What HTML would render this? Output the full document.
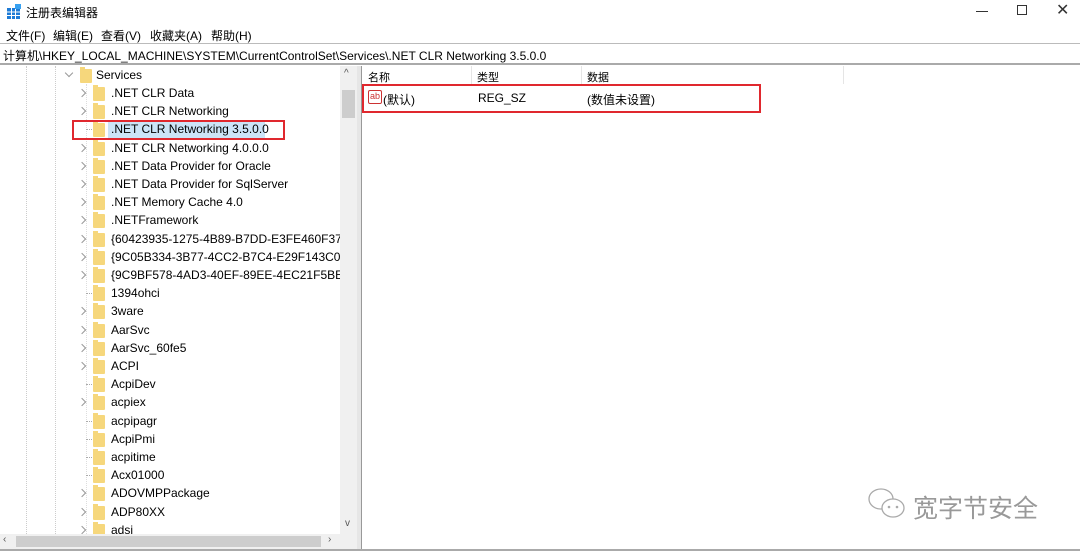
<!DOCTYPE html>
<html><head><meta charset="utf-8"><style>
*{margin:0;padding:0;box-sizing:border-box}
body{width:1080px;height:551px;background:#fff;font-family:"Liberation Sans","Noto Sans CJK SC",sans-serif;font-size:12px;color:#000;position:relative;overflow:hidden}
.a{position:absolute;white-space:nowrap}
.fold{position:absolute;width:12px;height:14px;background:#f6d77c;border-radius:1px}
.fold:before{content:"";position:absolute;left:0;top:-2px;width:5px;height:3px;background:#f6d77c}
.chev{position:absolute;width:6px;height:6px;border-right:1px solid #999;border-bottom:1px solid #999;transform:rotate(-45deg)}
.row{position:absolute;left:0;width:340px;height:18px;overflow:hidden}
.row span{position:absolute;left:111px;top:2px;font-size:12px;white-space:nowrap}
</style></head><body>
<svg class="a" style="left:6px;top:4px" width="16" height="16"><rect x="1" y="4" width="13" height="11" fill="#1e7bd6"/><g stroke="#fff" stroke-width="1"><line x1="1" y1="8" x2="14" y2="8"/><line x1="1" y1="11.5" x2="14" y2="11.5"/><line x1="5.5" y1="4" x2="5.5" y2="15"/><line x1="9.5" y1="4" x2="9.5" y2="15"/></g><rect x="9" y="0" width="6" height="5" fill="#37a0f0"/></svg>
<div class="a" style="left:26px;top:4px;font-size:12px">注册表编辑器</div>
<div class="a" style="left:976px;top:11px;width:12px;height:1px;background:#333"></div>
<div class="a" style="left:1017px;top:5px;width:10px;height:10px;border:1px solid #333"></div>
<div class="a" style="left:1056px;top:0px;font-size:16px;color:#333">✕</div>
<div class="a" style="left:6px;top:27px">文件(F)</div>
<div class="a" style="left:53px;top:27px">编辑(E)</div>
<div class="a" style="left:101px;top:27px">查看(V)</div>
<div class="a" style="left:150px;top:27px">收藏夹(A)</div>
<div class="a" style="left:211px;top:27px">帮助(H)</div>
<div class="a" style="left:0;top:43px;width:1080px;height:1px;background:#bbb"></div>
<div class="a" style="left:3px;top:47px;font-size:12px">计算机\HKEY_LOCAL_MACHINE\SYSTEM\CurrentControlSet\Services\.NET CLR Networking 3.5.0.0</div>
<div class="a" style="left:0;top:63px;width:1080px;height:2px;background:#aaa"></div>
<div class="a" style="left:26px;top:66px;height:468px;border-left:1px dotted #ccc"></div>
<div class="a" style="left:55px;top:66px;height:468px;border-left:1px dotted #ccc"></div>
<div class="a" style="left:86px;top:84px;height:450px;border-left:1px dotted #ddd"></div>
<div class="chev" style="left:66px;top:70px;transform:rotate(45deg)"></div>
<div class="fold" style="left:80px;top:69px"></div>
<div class="a" style="left:96px;top:68px">Services</div>
<div class="a" style="left:108px;top:122px;width:157px;height:16px;background:#cce4f7"></div>
<div id="rows"></div>
<div class="a" style="left:72px;top:120px;width:213px;height:20px;border:2px solid #e0282e"></div>
<div class="a" style="left:340px;top:66px;width:17px;height:468px;background:#f0f0f0"></div>
<div class="a" style="left:342px;top:90px;width:13px;height:28px;background:#cdcdcd"></div>
<div class="a" style="left:344px;top:68px;font-size:10px;color:#555">^</div>
<div class="a" style="left:345px;top:518px;font-size:10px;color:#555">v</div>
<div class="a" style="left:0;top:534px;width:357px;height:15px;background:#f0f0f0"></div>
<div class="a" style="left:16px;top:536px;width:305px;height:11px;background:#cdcdcd"></div>
<div class="a" style="left:3px;top:534px;font-size:10px;color:#555">‹</div>
<div class="a" style="left:328px;top:534px;font-size:10px;color:#555">›</div>
<div class="a" style="left:357px;top:66px;width:5px;height:485px;background:#e6e6e6"></div>
<div class="a" style="left:361px;top:66px;width:1px;height:485px;background:#999"></div>
<div class="a" style="left:0;top:549px;width:1080px;height:2px;background:#aaa"></div>
<div class="a" style="left:368px;top:69px;font-size:11px">名称</div>
<div class="a" style="left:471px;top:66px;width:1px;height:18px;background:#e5e5e5"></div>
<div class="a" style="left:477px;top:69px;font-size:11px">类型</div>
<div class="a" style="left:581px;top:66px;width:1px;height:18px;background:#e5e5e5"></div>
<div class="a" style="left:587px;top:69px;font-size:11px">数据</div>
<div class="a" style="left:843px;top:66px;width:1px;height:18px;background:#e5e5e5"></div>
<div class="a" style="left:362px;top:84px;width:399px;height:29px;border:2px solid #e0282e"></div>
<div class="a" style="left:368px;top:90px;width:14px;height:14px;border:1px solid #c33;border-radius:2px;font-size:9px;color:#c33;line-height:11px;text-align:center">ab</div>
<div class="a" style="left:383px;top:91px;font-size:12px">(默认)</div>
<div class="a" style="left:478px;top:91px;font-size:12px">REG_SZ</div>
<div class="a" style="left:587px;top:91px;font-size:12px">(数值未设置)</div>
<svg class="a" style="left:866px;top:487px" width="44" height="34"><g fill="none" stroke="#aaa" stroke-width="1.3"><ellipse cx="15" cy="12" rx="12" ry="10"/><ellipse cx="27" cy="21" rx="11" ry="9" fill="#fff"/></g><circle cx="23" cy="20" r="1.3" fill="#aaa"/><circle cx="31" cy="20" r="1.3" fill="#aaa"/></svg>
<div class="a" style="left:913px;top:489px;font-size:25px;color:#999">宽字节安全</div>
<script>
var items=[[".NET CLR Data",1],[".NET CLR Networking",1],[".NET CLR Networking 3.5.0.0",0],[".NET CLR Networking 4.0.0.0",1],[".NET Data Provider for Oracle",1],[".NET Data Provider for SqlServer",1],[".NET Memory Cache 4.0",1],[".NETFramework",1],["{60423935-1275-4B89-B7DD-E3FE460F3701}",1],["{9C05B334-3B77-4CC2-B7C4-E29F143C0C2A}",1],["{9C9BF578-4AD3-40EF-89EE-4EC21F5BEAB8}",1],["1394ohci",0],["3ware",1],["AarSvc",1],["AarSvc_60fe5",1],["ACPI",1],["AcpiDev",0],["acpiex",1],["acpipagr",0],["AcpiPmi",0],["acpitime",0],["Acx01000",0],["ADOVMPPackage",1],["ADP80XX",1],["adsi",1]];
var h="";items.forEach(function(it,i){var t=84+18.2*i;
h+='<div class="row" style="top:'+t+'px">'+(it[1]?'<div class="chev" style="left:79px;top:6px"></div>':'<div class="a" style="left:86px;top:9px;width:6px;border-top:1px dotted #aaa"></div>')+'<div class="fold" style="left:93px;top:3px"></div><span>'+it[0]+'</span></div>';});
document.getElementById("rows").innerHTML=h;
</script>
</body></html>
